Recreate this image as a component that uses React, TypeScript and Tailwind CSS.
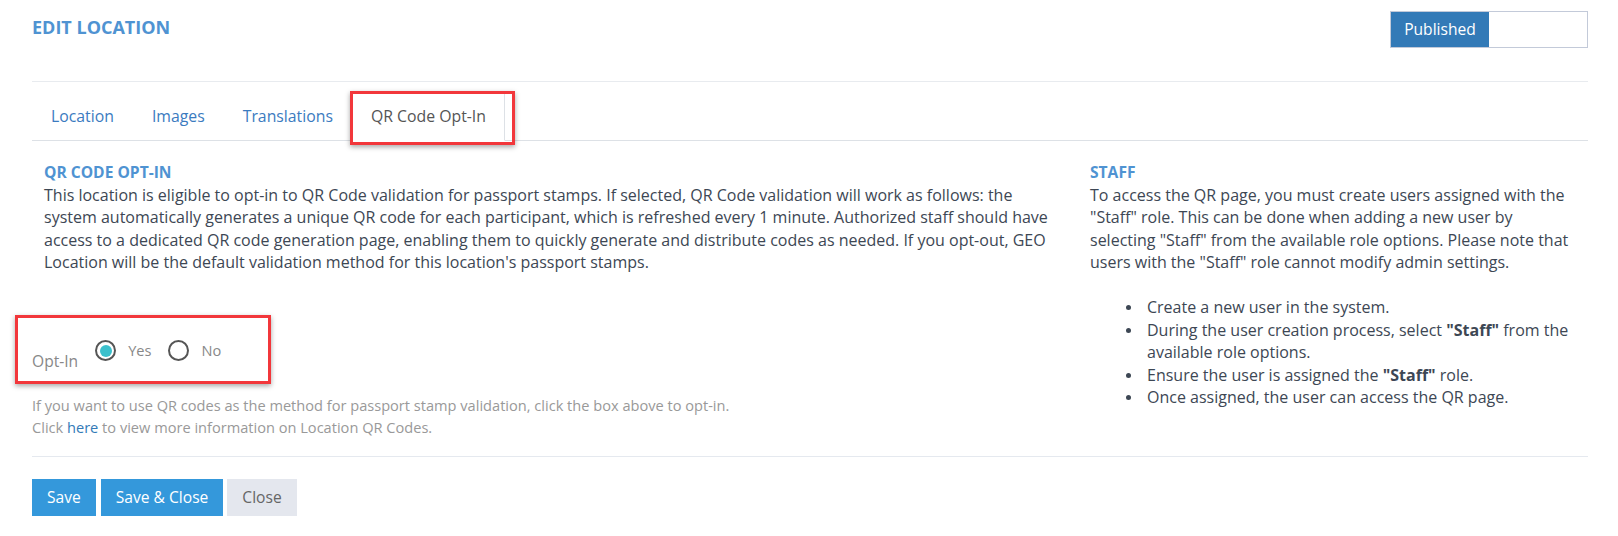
import React, { useState } from 'react';

const tabs = ['Location', 'Images', 'Translations', 'QR Code Opt-In'];

const App: React.FC = () => {
  const [optIn, setOptIn] = useState(true);

  return (
    <div className="min-h-[536px] bg-white pl-[32px] pr-[30px] pt-[11px] font-['Open_Sans',sans-serif] text-[16px] text-[#3d4754]">
      {/* Header */}
      <div className="flex items-start justify-between border-b border-[#e8ebef] pb-[33px]">
        <h1 className="mt-[5px] text-[18px] font-bold uppercase leading-[22px] text-[#4f93d2]">Edit Location</h1>
        <div className="flex h-[37px] w-[198px] border border-[#c3cad9]">
          <div className="flex w-[98px] items-center justify-center bg-[#337ab7] text-[15.6px] text-white">Published</div>
          <div className="flex-1 bg-white" />
        </div>
      </div>

      {/* Tabs */}
      <ul className="mt-[11px] flex border-b border-[#dde1e6]">
        {tabs.map((t, i) => {
          const active = i === tabs.length - 1;
          return (
            <li key={t} className="relative -mb-px">
              <a
                className={
                  active
                    ? 'block h-[48px] border border-b-white border-[#dde1e6] bg-white px-[18px] pt-[11px] text-[15.8px] text-[#555]'
                    : 'block h-[47px] border border-transparent px-[18px] pt-[11px] text-[15.8px] text-[#3b7bbf]'
                }
              >
                {t}
              </a>
              {active && (
                <div className="pointer-events-none absolute -top-[2px] -left-[2px] h-[54px] w-[165px] border-[3px] border-[#f2373b] shadow-[0_2px_5px_rgba(0,0,0,0.35)]" />
              )}
            </li>
          );
        })}
      </ul>

      {/* Body */}
      <div className="grid grid-cols-[1037px_1fr] pt-[20px]">
        <div>
          <div className="px-[12px] leading-[22.6px]">
            <h2 className="text-[15.6px] font-bold uppercase text-[#4f93d2]">QR Code Opt-In</h2>
            <p>
              This location is eligible to opt-in to QR Code validation for passport stamps. If selected, QR Code validation will
              work as follows: the system automatically generates a unique QR code for each participant, which is refreshed every
              1 minute. Authorized staff should have access to a dedicated QR code generation page, enabling them to quickly
              generate and distribute codes as needed. If you opt-out, GEO Location will be the default validation method for
              this location's passport stamps.
            </p>
          </div>

          <div className="relative mt-[66px] flex w-fit items-start">
            <span className="mt-[10px] text-[15.6px] text-[#888]">Opt-In</span>
            <label className="ml-[17px] flex cursor-pointer items-center" onClick={() => setOptIn(true)}>
              <span className="flex h-[21px] w-[21px] items-center justify-center rounded-full border-2 border-[#555]">
                {optIn && <span className="h-[12px] w-[12px] rounded-full bg-[#3bc0cc]" />}
              </span>
              <span className="ml-[12px] text-[14.6px] text-[#888]">Yes</span>
            </label>
            <label className="ml-[17px] flex cursor-pointer items-center" onClick={() => setOptIn(false)}>
              <span className="flex h-[21px] w-[21px] items-center justify-center rounded-full border-2 border-[#555]">
                {!optIn && <span className="h-[12px] w-[12px] rounded-full bg-[#3bc0cc]" />}
              </span>
              <span className="ml-[12px] text-[14.6px] text-[#888]">No</span>
            </label>
            <div className="pointer-events-none absolute -top-[25px] -left-[17px] h-[69px] w-[256px] border-[3px] border-[#f2373b] shadow-[0_2px_5px_rgba(0,0,0,0.35)]" />
          </div>

          <div className="mt-[21px] text-[14.6px] leading-[22px] text-[#999]">
            <p>If you want to use QR codes as the method for passport stamp validation, click the box above to opt-in.</p>
            <p>
              Click <a className="text-[#337ab7]">here</a> to view more information on Location QR Codes.
            </p>
          </div>
        </div>

        <div className="pl-[21px] leading-[22.6px]">
          <h2 className="text-[15.6px] font-bold uppercase text-[#4f93d2]">Staff</h2>
          <p className="mb-[22px]">
            To access the QR page, you must create users assigned with the "Staff" role. This can be done when adding a new
            user by
            <br />
            selecting "Staff" from the available role options. Please note that users with the "Staff" role cannot modify
            admin settings.
          </p>
          <ul className="pl-[36px]">
            {[
              <>Create a new user in the system.</>,
              <>
                During the user creation process, select <b>"Staff"</b> from the available role options.
              </>,
              <>
                Ensure the user is assigned the <b>"Staff"</b> role.
              </>,
              <>Once assigned, the user can access the QR page.</>,
            ].map((item, i) => (
              <li key={i} className="flex">
                <span className="mt-[9px] mr-[16px] h-[5px] w-[5px] shrink-0 rounded-full bg-[#3d4754]" />
                <div>{item}</div>
              </li>
            ))}
          </ul>
        </div>
      </div>

      {/* Footer */}
      <div className="mt-[18px] flex gap-[5px] border-t border-[#e5e9ef] pt-[22px]">
        <button className="h-[37px] bg-[#3498db] px-[15px] text-[15.6px] text-white">Save</button>
        <button className="h-[37px] bg-[#3498db] px-[15px] text-[15.6px] text-white">Save &amp; Close</button>
        <button className="-ml-px h-[37px] bg-[#e4e7ee] px-[15px] text-[15.6px] text-[#666]">Close</button>
      </div>
    </div>
  );
};

export default App;
